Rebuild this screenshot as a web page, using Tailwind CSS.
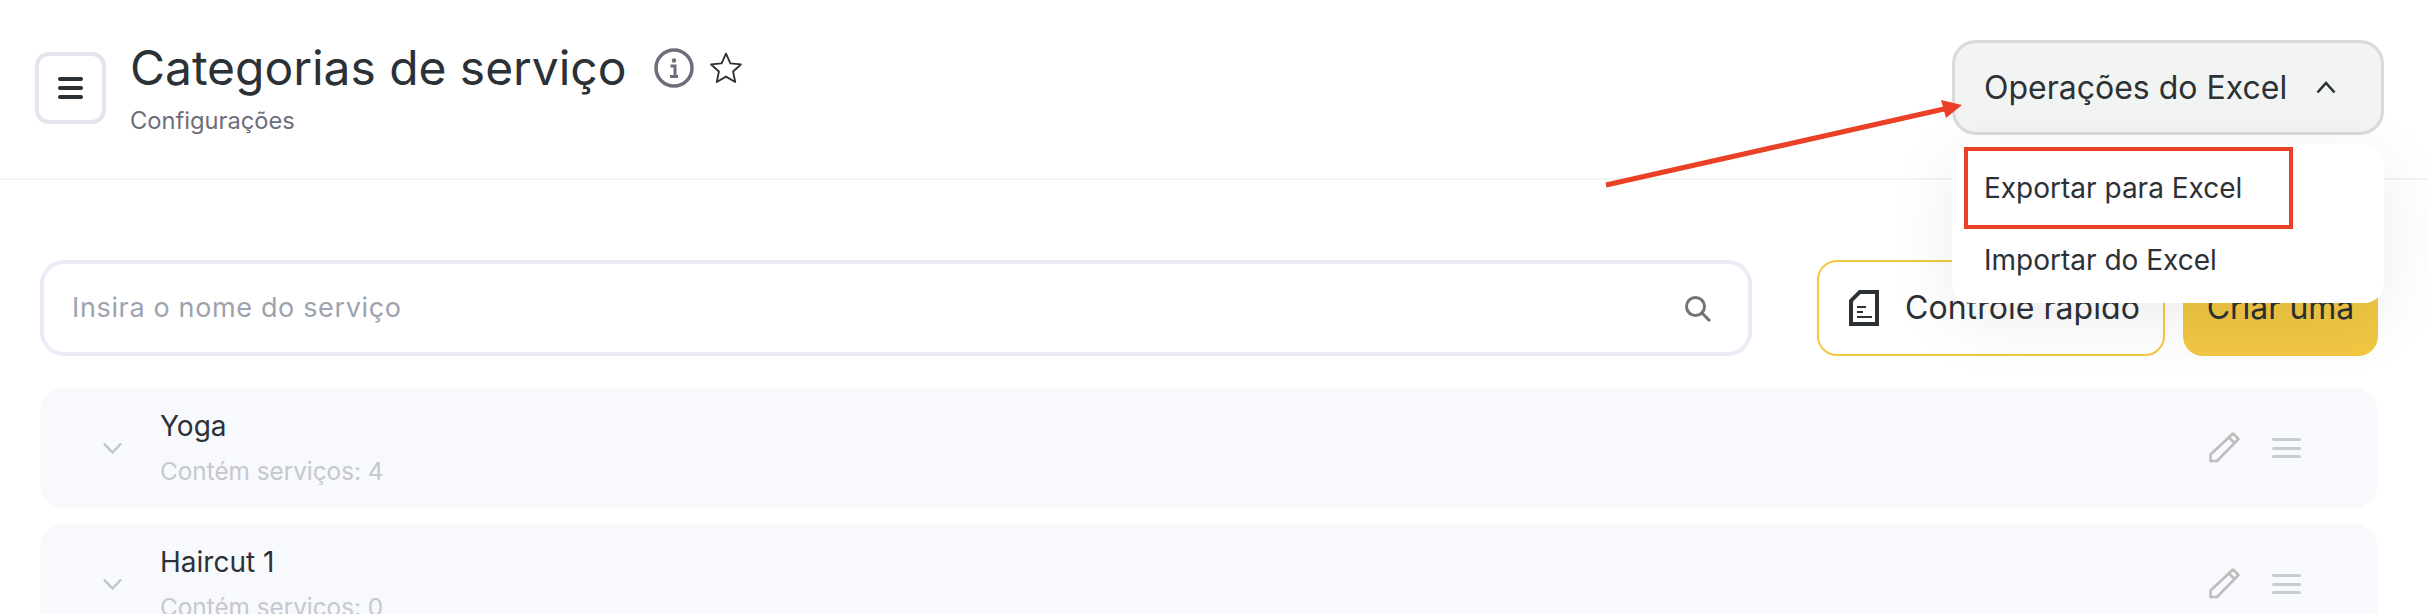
<!DOCTYPE html>
<html lang="pt">
<head>
  <meta charset="UTF-8" />
  <title>Categorias de serviço</title>
  <script src="https://cdn.jsdelivr.net/npm/@tailwindcss/browser@4"></script>
</head>
<body class="bg-white h-[614px] overflow-hidden font-['Inter',sans-serif] text-[#2c3136]">

  <!-- Header -->
  <header class="relative z-10 h-[180px] border-b-2 border-[#f3f4f6] flex items-start justify-between pl-[35px] pr-[44px]">
    <div class="flex items-start">
      <button class="mt-[52px] w-[71px] h-[72px] rounded-[14px] border-4 border-[#e2e5ee] flex flex-col items-center justify-center gap-[5px]">
        <span class="block w-[25px] h-[4px] rounded-sm bg-[#2c3136]"></span>
        <span class="block w-[25px] h-[4px] rounded-sm bg-[#2c3136]"></span>
        <span class="block w-[25px] h-[4px] rounded-sm bg-[#2c3136]"></span>
      </button>
      <div class="ml-[24px] mt-[38px]">
        <div class="flex items-center">
          <h1 class="text-[48px] leading-[60px] font-normal tracking-[-0.05px]">Categorias de serviço</h1>
          <svg class="ml-[28px] w-[40px] h-[40px]" viewBox="0 0 40 40" fill="none">
            <circle cx="20" cy="20" r="18" stroke="#6d6e7b" stroke-width="3.5"/>
            <circle cx="20" cy="12.500" r="2.200" fill="#6d6e7b"/>
            <path d="M16.500 18h4.500v10M16 28.500h8" stroke="#6d6e7b" stroke-width="3"/>
          </svg>
          <svg class="ml-[15px] w-[34px] h-[34px]" viewBox="0 0 24 24" fill="none" stroke="#2c3136" stroke-width="1.300" stroke-linejoin="round">
            <path d="M12 1.800l3.100 6.900 7.400.8-5.500 5 1.500 7.400-6.500-3.800-6.500 3.800L7 14.500l-5.500-5 7.400-.8z"/>
          </svg>
        </div>
        <p class="mt-[7px] text-[23.700px] leading-[32px] text-[#6d6e7b]">Configurações</p>
      </div>
    </div>

    <!-- Excel menu -->
    <div class="relative mt-[40px] w-[432px]">
      <button class="w-full h-[95px] rounded-[24px] border-[3px] border-[#d8d9d9] bg-[#f2f4f3] flex items-center justify-between pl-[29px] pr-[45px]">
        <span class="text-[32px]">Operações do Excel</span>
        <svg class="w-[20px] h-[13px]" viewBox="0 0 20 13" fill="none" stroke="#2c3136" stroke-width="2.600"><path d="M1.500 11.500L10 2l8.500 9.500"/></svg>
      </button>
      <div class="absolute left-0 top-[104px] w-full h-[159px] rounded-[20px] bg-white shadow-[0_16px_70px_rgba(0,0,0,0.08)] text-[28px]">
        <div class="h-[85px] pl-[32px] flex items-center pt-[2px]">Exportar para Excel</div>
        <div class="h-[62px] pl-[32px] flex items-center">Importar do Excel</div>
        <div class="absolute left-[12px] top-[3px] w-[329px] h-[82px] border-[4px] border-[#ea4025]"></div>
      </div>
      <!-- annotation arrow -->
      <svg class="absolute left-[-350px] top-[55px] w-[370px] h-[100px]" viewBox="0 0 370 100" fill="none">
        <path d="M4 90L342 14" stroke="#ea4025" stroke-width="5"/>
        <path d="M360 10L339 5L344 23z" fill="#ea4025"/>
      </svg>
    </div>
  </header>

  <main class="pl-[40px] pr-[50px] pt-[80px]">
    <!-- Toolbar -->
    <div class="flex items-stretch h-[96px]">
      <div class="w-[1712px] rounded-[24px] border-4 border-[#e9ecf5] flex items-center justify-between pl-[28px] pr-[37px]">
        <span class="text-[27px] tracking-[0.650px] text-[#9ca3af]">Insira o nome do serviço</span>
        <svg class="w-[27px] h-[27px]" viewBox="0 0 27 27" fill="none" stroke="#737373" stroke-width="3"><circle cx="11.500" cy="11.500" r="9"/><path d="M18 18l8 8"/></svg>
      </div>
      <button class="ml-[65px] w-[348px] rounded-[20px] border-2 border-[#f5c842] flex items-center pl-[30px]">
        <svg class="w-[30px] h-[36px]" viewBox="0 0 30 36" fill="#2c3136">
          <path d="M10 0h20v36H0V10z"/>
          <path d="M11.500 4H26v28H4V11.500z" fill="white"/>
          <path d="M8 17h9M8 22h6M8 27h15" stroke="#2c3136" stroke-width="2.200"/>
        </svg>
        <span class="ml-[26px] text-[32px] tracking-[0.05px] whitespace-nowrap">Controle rápido</span>
      </button>
      <button class="ml-[18px] w-[195px] rounded-[20px] bg-[#f1c743] text-[32px] text-center whitespace-nowrap">Criar uma</button>
    </div>

    <!-- Categories -->
    <div class="mt-[32px] flex flex-col gap-[16px]">
      <div class="h-[120px] rounded-[24px] bg-[#f7f9fd] flex items-center pl-[63px] pr-[77px]">
        <svg class="w-[19px] h-[12px]" viewBox="0 0 19 12" fill="none" stroke="#bfc3ca" stroke-width="2.400"><path d="M1 1.500l8.500 9 8.500-9"/></svg>
        <div class="ml-[38px] flex-1">
          <div class="text-[28px] leading-[34px] -mt-[2px]">Yoga</div>
          <div class="mt-[13px] text-[24.300px] leading-[30px] text-[#c5c8ce]">Contém serviços: 4</div>
        </div>
        <svg class="w-[33px] h-[33px] -mt-[1px]" viewBox="0 0 33 33" fill="none" stroke="#bdbdbd" stroke-width="2.600" stroke-linejoin="round"><path d="M25 2.500l5.500 5.500L9 30H2.500v-6.500zM21 6.500l5.500 5.500"/></svg>
        <div class="ml-[31px] w-[29px] flex flex-col gap-[5.500px]">
          <span class="block h-[3px] rounded-sm bg-[#c6cbd5]"></span>
          <span class="block h-[3px] rounded-sm bg-[#c6cbd5]"></span>
          <span class="block h-[3px] rounded-sm bg-[#c6cbd5]"></span>
        </div>
      </div>
      <div class="h-[120px] rounded-[24px] bg-[#f7f9fd] flex items-center pl-[63px] pr-[77px]">
        <svg class="w-[19px] h-[12px]" viewBox="0 0 19 12" fill="none" stroke="#bfc3ca" stroke-width="2.400"><path d="M1 1.500l8.500 9 8.500-9"/></svg>
        <div class="ml-[38px] flex-1">
          <div class="text-[28px] leading-[34px] -mt-[2px]">Haircut 1</div>
          <div class="mt-[13px] text-[24.300px] leading-[30px] text-[#c5c8ce]">Contém serviços: 0</div>
        </div>
        <svg class="w-[33px] h-[33px] -mt-[1px]" viewBox="0 0 33 33" fill="none" stroke="#bdbdbd" stroke-width="2.600" stroke-linejoin="round"><path d="M25 2.500l5.500 5.500L9 30H2.500v-6.500zM21 6.500l5.500 5.500"/></svg>
        <div class="ml-[31px] w-[29px] flex flex-col gap-[5.500px]">
          <span class="block h-[3px] rounded-sm bg-[#c6cbd5]"></span>
          <span class="block h-[3px] rounded-sm bg-[#c6cbd5]"></span>
          <span class="block h-[3px] rounded-sm bg-[#c6cbd5]"></span>
        </div>
      </div>
    </div>
  </main>
</body>
</html>
